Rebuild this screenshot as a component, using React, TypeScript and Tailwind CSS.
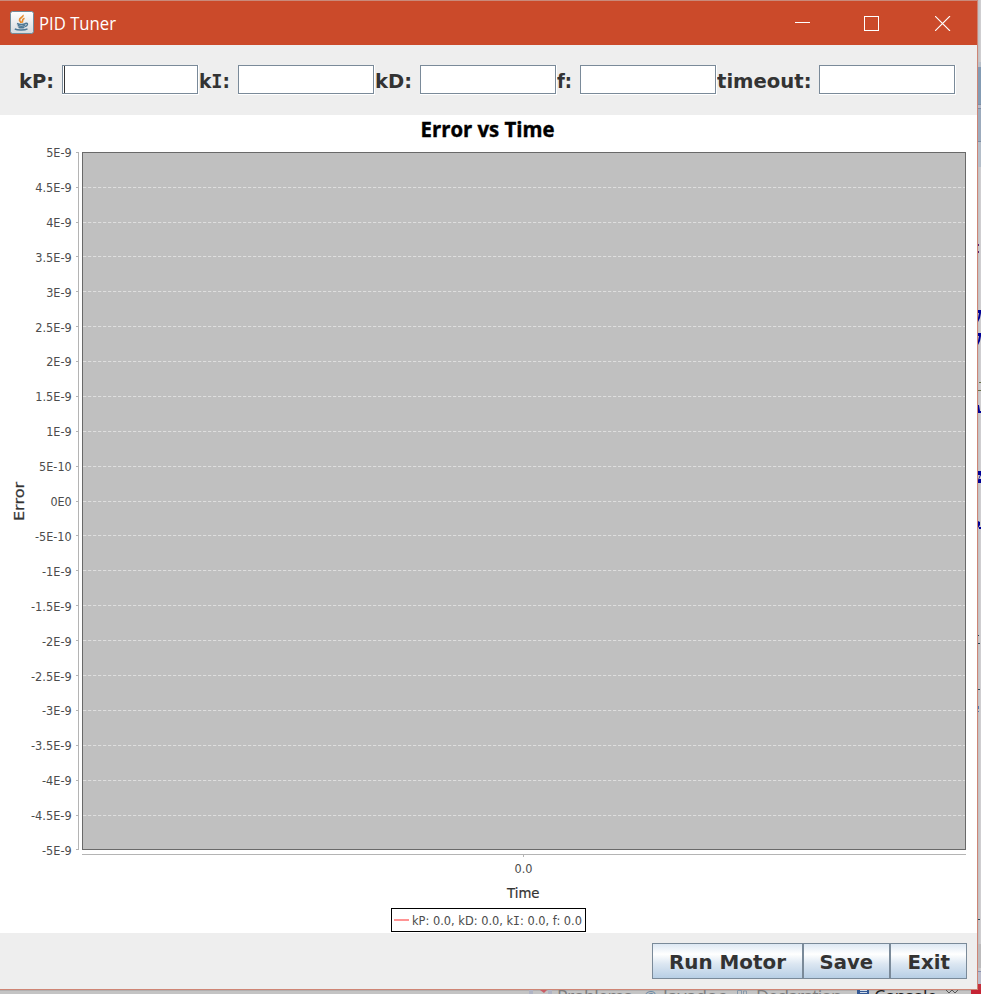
import React from "react";

const fields = [
  { label: "kP:", cell: "w-[43px]", len: 35 },
  { label: "kI:", cell: "w-[39px]", len: 31 },
  { label: "kD:", cell: "w-[45px]", len: 37 },
  { label: "f:", cell: "w-[23px]", len: 15 },
  { label: "timeout:", cell: "w-[102px]", len: 94.5 },
];

const ticks = [
  "5E-9", "4.5E-9", "4E-9", "3.5E-9", "3E-9", "2.5E-9", "2E-9", "1.5E-9", "1E-9", "5E-10", "0E0",
  "-5E-10", "-1E-9", "-1.5E-9", "-2E-9", "-2.5E-9", "-3E-9", "-3.5E-9", "-4E-9", "-4.5E-9", "-5E-9",
];

const tickY = [
  152, 187, 222, 256, 291, 326, 361, 396, 431, 466, 501, 535, 570, 605, 640, 675, 710, 745, 780, 815, 849,
];

/* Text in which every capital I carries serifs. */
function SerifI({ text }: { text: string }) {
  return (
    <>
      {text.split(/(I)/).map((part, i) =>
        part === "I" ? (
          <tspan key={i} className="font-['DejaVu_Sans_Mono',monospace]">I</tspan>
        ) : (
          <tspan key={i}>{part}</tspan>
        ),
      )}
    </>
  );
}

function JavaIcon() {
  return (
    <svg className="ml-2.5 h-6 w-6 shrink-0" viewBox="0 0 24 24" fill="none">
      <defs>
        <linearGradient id="jbg" x1="0" y1="0" x2="0" y2="1">
          <stop offset="0" stopColor="#fff" />
          <stop offset="1" stopColor="#d5dade" />
        </linearGradient>
      </defs>
      <rect x="0.5" y="0.5" width="23" height="22" rx="2" fill="url(#jbg)" stroke="#6f8c9c" />
      <path d="M13 4c1 2-4 3-3.500 5.200.3 1 1.500 1.500 1.500 2.800M14.500 7.300c-2.800 1.200-1.800 2.300-2.200 4.300" stroke="#e58a2c" strokeWidth="1.700" />
      <path d="M7 12.500c2 .9 6.500.9 9 0M7.700 14.500c2 .8 5.300.8 7.300 0M8.500 16.300c2 .7 4 .7 6 0M15.500 12.300c3-.7 2.500 2.300-.5 3.200M4.800 18c3 1.400 10 1.200 12.700-.2" stroke="#4d7895" strokeWidth="1.400" />
    </svg>
  );
}

function TitleBar() {
  return (
    <div className="flex h-[45px] items-center border-t border-[#c98a7b] bg-[#cb4a2a]">
      <JavaIcon />
      <svg className="ml-[5px] h-11 w-[90px]">
        <text x="0" y="29" fill="#fff" fontSize="17.500" textLength="77" lengthAdjust="spacingAndGlyphs" className="font-['Open_Sans',sans-serif]">PID Tuner</text>
      </svg>
      <div className="ml-auto mr-[26px] flex items-center">
        <div className="h-px w-[15px] -translate-y-px bg-white" />
        <div className="ml-[54px] h-[15px] w-[15px] border border-white" />
        <svg className="ml-14 h-[15px] w-4" viewBox="0 0 16 15">
          <path d="M0 0l15 15M15 0l-15 15" stroke="#fff" strokeWidth="1.100" />
        </svg>
      </div>
    </div>
  );
}

function Toolbar() {
  return (
    <div className="flex h-[70px] items-start bg-[#eeeeee] pl-[19px] pt-5">
      {fields.map((f, i) => (
        <React.Fragment key={f.label}>
          <svg className={`h-[29px] shrink-0 ${f.cell}`}>
            <text x="0" y="23" fill="#333" fontSize="20" fontWeight="700" textLength={f.len} lengthAdjust="spacingAndGlyphs" className="font-['DejaVu_Sans',sans-serif]">
              <SerifI text={f.label} />
            </text>
          </svg>
          <div className="h-[30px] w-[137px] shrink-0 border-b border-r border-white">
            <div className="h-full border border-[#7a8a99] bg-white">
              {i === 0 && <div className="ml-px h-full w-px bg-[#333]" />}
            </div>
          </div>
        </React.Fragment>
      ))}
    </div>
  );
}

function Chart() {
  return (
    <svg className="block h-[818px] w-full bg-white font-['DejaVu_Sans',sans-serif]" viewBox="0 115 977 818">
      <text x="420.500" y="136.700" fontSize="21" fontWeight="700" fill="#000" stroke="#000" strokeWidth=".4" textLength="134" lengthAdjust="spacingAndGlyphs" className="font-['Open_Sans',sans-serif]">Error vs Time</text>
      <rect x="82.500" y="152.500" width="883" height="697" fill="#c0c0c0" stroke="#696969" />
      {ticks.map((t, i) => {
        const y = tickY[i] + 0.5;
        const len = [...t].reduce((a, c) => a + (c === "-" ? 4.2 : c === "." ? 3.9 : 7.1), 0);
        return (
          <g key={t}>
            {i > 0 && i < 20 && <path d={`M83 ${y}H965`} stroke="#dedede" strokeDasharray="3.300 1.700" />}
            <path d={`M76 ${y}h2`} stroke="#b4b4b4" />
            <text x="71.700" y={Math.round(152 + i * 34.9) + 5} fontSize="12" fill="#4c4c4c" textAnchor="end" textLength={len} lengthAdjust="spacingAndGlyphs">{t}</text>
          </g>
        );
      })}
      <path d="M78.500 152V850M82 854.500H966M523.500 855v2" stroke="#b4b4b4" />
      <text transform="translate(24 521) rotate(-90)" fontSize="14.500" fill="#333" stroke="#333" strokeWidth=".2" textLength="39" lengthAdjust="spacingAndGlyphs">Error</text>
      <text x="514.500" y="873" fontSize="12" fill="#4c4c4c" textLength="18" lengthAdjust="spacingAndGlyphs">0.0</text>
      <text x="507" y="898" fontSize="14.500" fill="#333" stroke="#333" strokeWidth=".2" textLength="32.500" lengthAdjust="spacingAndGlyphs">Time</text>
      <rect x="391.500" y="908.500" width="194" height="23" fill="#fff" stroke="#000" />
      <path d="M394 920h15" stroke="#ff9494" strokeWidth="2" />
      <text x="412" y="925" fontSize="12" fill="#4c4c4c" textLength="170" lengthAdjust="spacingAndGlyphs">
        <SerifI text="kP: 0.0, kD: 0.0, kI: 0.0, f: 0.0" />
      </text>
    </svg>
  );
}

const buttons = [
  { label: "Run Motor", width: "w-[151px]", x: 16, len: 117 },
  { label: "Save", width: "w-[87px]", x: 15.5, len: 53.5 },
  { label: "Exit", width: "w-[77px]", x: 16.5, len: 42.5 },
];

function Footer() {
  return (
    <div className="flex h-14 justify-end bg-[#eeeeee] pr-2.5 pt-2.5">
      {buttons.map((b) => (
        <button key={b.label} className={`h-9 border border-[#7a8a99] bg-[linear-gradient(#dde8f3_0%,#ffffff_30%,#dce7f2_58%,#b8cfe5_100%)] ${b.width}`}>
          <svg className="block h-[34px] w-full">
            <text x={b.x} y="25" fontSize="20" fontWeight="700" fill="#333" textLength={b.len} lengthAdjust="spacingAndGlyphs" className="font-['DejaVu_Sans',sans-serif]">{b.label}</text>
          </svg>
        </button>
      ))}
    </div>
  );
}

function BackgroundEditor() {
  return (
    <svg className="block h-[990px] w-[3px] shrink-0" viewBox="978 0 3 990">
      <defs>
        <linearGradient id="shade">
          <stop offset="0" stopColor="#c0bfc0" />
          <stop offset="1" stopColor="#d2d1d4" />
        </linearGradient>
      </defs>
      <rect x="978" width="3" height="990" fill="url(#shade)" />
      <path d="M978 62h3v5h-3z" fill="#b9c0c9" />
      <path d="M978 67h3v37h-3z" fill="#839bb3" />
      <path d="M978 104h3v4h-3z" fill="#b2b9c9" />
      <path d="M978 108h3v34h-3z" fill="#9cabbd" />
      <path d="M978 142h3v25h-3z" fill="#b4bec9" />
      <path d="M978 104.500h3M978 108.500h3M978 141.500h3" stroke="#7d8da4" />
      <path d="M978 244h1v2h-1zM978 251h1v2h-1z" fill="#5b236e" />
      <path d="M978 310h3v3l-1 5-2 4v-4l1-5h-1zM978 333h3v3l-1 5-2 4v-4l1-5h-1zM978 405v8h3v-2h-1l-1-6zM978 471h3v4l-2 4h2v4h-3v-3l2-5h-2zM978 521l2 1v3l-2 3zM979 527h2v2h-2z" fill="#000096" />
      <path d="M979 382.500h2M978 390.500h3" stroke="#68704a" />
      <path d="M978 635.500h1M978 643.500h2M978 689.500h2M978 919.500h2" stroke="#244858" />
      <path d="M978 706h1v3h-1zM978 711h1v1h-1z" fill="#527bb1" />
      <path d="M978 944h3v24h-3z" fill="#bcbbbc" />
      <path d="M978 971.500h3" stroke="#8890b0" />
      <path d="M978 972h3v12h-3z" fill="#bbbccb" />
      <path d="M978 984h3v6h-3z" fill="#c5303c" />
    </svg>
  );
}

function BackgroundTabs() {
  return (
    <svg className="block h-1 w-full" viewBox="0 990 981 4">
      <rect y="990" width="981" height="4" fill="#c4c4c4" />
      <path d="M0 990.500H981" stroke="#b2b0b0" />
      <path d="M529 990h4v4h-4zM548 990h4v4h-4z" fill="#b0b4c4" />
      <path d="M540 990h7l-3 3z" fill="#c95f67" />
      <g fontSize="18" fill="#7c7c7c" className="font-['Open_Sans',sans-serif]">
        <text x="557" y="1003" textLength="75">Problems</text>
        <text x="644" y="1001" fill="#6f8ba5" fontSize="14" textLength="13">@</text>
        <text x="663" y="1003" textLength="63">Javadoc</text>
        <text x="756" y="1003" textLength="86">Declaration</text>
        <text x="874" y="1003" fill="#202020" textLength="63">Console</text>
      </g>
      <path d="M737.500 994v-3.500h4v3.500M743.500 994v-3h3v3" stroke="#8799ab" fill="none" />
      <path d="M857 990h12v4h-12z" fill="#345996" />
      <path d="M860 990h7v1h-7zM860 992h7v1h-7z" fill="#d0dbe8" />
      <path d="M946 990l3 3 3-3 3 3 3-3" stroke="#555" fill="none" />
      <path d="M971 990h10v4h-10z" fill="#c52434" />
    </svg>
  );
}

export default function App() {
  return (
    <div className="h-[994px] w-[981px] overflow-hidden bg-[#c4c4c4]">
      <div className="flex h-[990px]">
        <div className="w-[978px] shrink-0 border-b border-r border-[#ce8575]">
          <TitleBar />
          <Toolbar />
          <Chart />
          <Footer />
        </div>
        <BackgroundEditor />
      </div>
      <BackgroundTabs />
    </div>
  );
}
